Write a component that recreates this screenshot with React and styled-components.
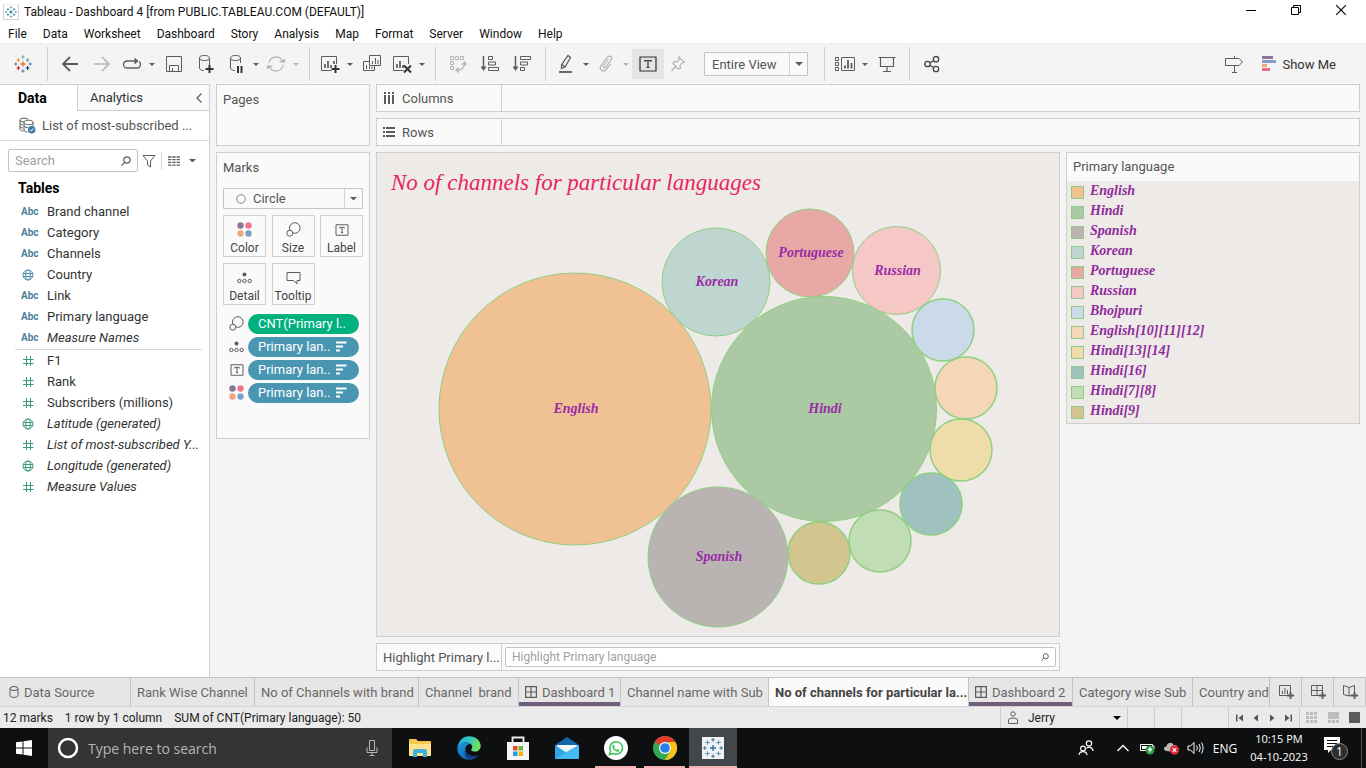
import React from "react";
import styled, { createGlobalStyle } from "styled-components";

const UI = `Roboto, "Liberation Sans", sans-serif`;
const SYS = `"Open Sans", "Noto Sans", sans-serif`;
const SCRIPT = `"Monotype Corsiva", "Lucida Calligraphy", "Liberation Serif", serif`;
const LINE = "#cfcfcf";

const Global = createGlobalStyle`
  *, *::before, *::after { box-sizing: border-box; }
  html, body { margin: 0; background: #f4f4f4; }
  body { font-family: ${UI}; font-size: 13px; color: #333; }
  button, input, select { font: inherit; color: inherit; margin: 0; }
  button { background: none; border: 0; padding: 0; cursor: pointer; }
  ul { list-style: none; margin: 0; padding: 0; }
  h1, h2, h3, p { margin: 0; font: inherit; }
  svg { display: block; flex: none; }
`;

const Page = styled.div`
  min-height: 100vh;
  display: flex;
  flex-direction: column;
`;

/* ---------- icons ---------- */

const Icon = ({ w = 20, h = w, box, children, color = "#5c5c5c", sw = 1, ...rest }) => (
  <svg width={w} height={h} viewBox={box || `0 0 ${w} ${h}`} fill="none" stroke={color} strokeWidth={sw} aria-hidden="true" {...rest}>
    {children}
  </svg>
);

const plus = (x, y, r) => `M${x - r} ${y}H${x + r}M${x} ${y - r}V${y + r}`;

const TableauMark = ({ size = 18, colors }) => {
  const c = colors || ["#e8762c", "#eb9a3c", "#c72035", "#7a9bb0", "#5b6b9a", "#1f457e"];
  return (
    <Icon w={size} box="0 0 18 18">
      <path d={plus(9, 9, 2.6)} stroke={c[0]} strokeWidth="1.5" />
      <path d={plus(4.4, 5, 1.9)} stroke={c[1]} strokeWidth="1.2" />
      <path d={plus(4.4, 13, 1.9)} stroke={c[2]} strokeWidth="1.2" />
      <path d={plus(13.6, 5, 1.9)} stroke={c[3]} strokeWidth="1.2" />
      <path d={plus(13.6, 13, 1.9)} stroke={c[5]} strokeWidth="1.2" />
      <path d={plus(9, 2, 1.7)} stroke={c[3]} />
      <path d={plus(9, 16, 1.7)} stroke={c[4]} />
      <path d={plus(1.8, 9, 1.5)} stroke={c[4]} />
      <path d={plus(16.2, 9, 1.5)} stroke={c[4]} />
    </Icon>
  );
};

const Caret = ({ w = 8, color = "#5c5c5c" }) => (
  <svg width={w} height={w / 2} viewBox="0 0 8 4" aria-hidden="true">
    <path d="M0 0H8L4 4Z" fill={color} />
  </svg>
);

const LIGHT = "#b4b4b4";
const DARK = "#333";

const BackIcon = () => <Icon sw="1.8"><path d="M18 10H3M10 3L3 10L10 17" /></Icon>;
const ForwardIcon = () => <Icon sw="1.6" color={LIGHT}><path d="M2 10H17M10 3L17 10L10 17" /></Icon>;
const RedoIcon = () => (
  <Icon sw="1.3"><path d="M15 7H5A3.500 3.500 0 0 0 5 14H15A3.500 3.500 0 0 0 18.500 10.500C18.500 9 18 8 17 7.500" /><path d="M12.500 3.500V10.500L16.500 7Z" fill="#5c5c5c" stroke="none" /></Icon>
);
const SaveIcon = () => <Icon><path d="M2.500 2.500H17.500V17.500H2.500ZM5.500 17V11.500H14.500V17M8.500 17V14" /></Icon>;
const DbAddIcon = () => (
  <Icon><ellipse cx="8.500" cy="4" rx="5" ry="2.500" /><path d="M3.500 4V14C3.500 15.500 5.500 16.500 8 16.500M13.500 4V11" /><path d="M13.500 11V19M9.500 15H17.500" stroke={DARK} strokeWidth="2" /></Icon>
);
const DbPauseIcon = () => (
  <Icon><ellipse cx="9.500" cy="4" rx="5" ry="2.500" /><path d="M4.500 4V14C4.500 15.500 6.500 16.500 9 16.500M14.500 4V9" /><path d="M12 12V19M15.500 12V19" stroke={DARK} strokeWidth="2" /></Icon>
);
const RefreshIcon = () => (
  <Icon color={LIGHT} sw="1.200"><path d="M3 9A7 7 0 0 1 16 6.500M17 11A7 7 0 0 1 4 13.500" /><path d="M13.500 8H18.500V5M6.500 12H1.500V15" fill={LIGHT} /></Icon>
);
const ChartAddIcon = () => (
  <Icon><path d="M11.500 16.500H1.500V2.500H16.500V10" /><path d="M5 14V10M8 14V7M11 14V11M14 10V7" strokeWidth="1.700" /><path d="M15.500 11V19M11.500 15H19.500" stroke={DARK} strokeWidth="2" /></Icon>
);
const DuplicateIcon = () => (
  <Icon><path d="M7.500 1.500H18.500V11.500H7.500ZM7 7.500H1.500V16.500H12.500V12" /><path d="M10.500 10V7M13.500 10V4M16 10V6M4.500 15V11M7.500 15V12.500M10 15V12.500" /></Icon>
);
const ClearIcon = () => (
  <Icon><path d="M11.500 16.500H1.500V2.500H16.500V10" /><path d="M5 14V10M8 14V7M11 14V11" strokeWidth="1.700" /><path d="M12 11.500L19 18.500M19 11.500L12 18.500" stroke={DARK} strokeWidth="2" /></Icon>
);
const SwapIcon = () => (
  <Icon color={LIGHT}><path d="M2.500 2.500H5.500V5.500H2.500ZM7.500 2.500H10.500V5.500H7.500ZM12.500 2.500H15.500V5.500H12.500ZM2.500 7.500H5.500V10.500H2.500ZM2.500 12.500H5.500V15.500H2.500Z" /><path d="M16.500 9C17 13 13.500 16.500 9 16M14 11L16.500 8L18.500 11M11 13.500L8 16L11 18.500" strokeWidth="1.300" /></Icon>
);
const SortAscIcon = () => (
  <Icon><path d="M3.500 2V15" strokeWidth="1.500" /><path d="M0.500 12.500H6.500L3.500 17Z" fill="#5c5c5c" stroke="none" /><path d="M8.500 2.500H12.500V5.500H8.500ZM8.500 8H15.500V11H8.500ZM8.500 13.500H18.500V16.500H8.500Z" /></Icon>
);
const SortDescIcon = () => (
  <Icon><path d="M3.500 2V15" strokeWidth="1.500" /><path d="M0.500 12.500H6.500L3.500 17Z" fill="#5c5c5c" stroke="none" /><path d="M8.500 2.500H18.500V5.500H8.500ZM8.500 8H15.500V11H8.500ZM8.500 13.500H12.500V16.500H8.500Z" /></Icon>
);
const PenIcon = () => (
  <Icon><path d="M12 1.500L14.500 3.500L9 13L5.500 14.500L5.500 11ZM6 10.500L9 13" strokeWidth="1.300" /><path d="M3 18H16" strokeWidth="1.800" /></Icon>
);
const ClipIcon = () => (
  <Icon color={LIGHT} sw="1.200"><path d="M12.500 5L7.500 11.500C6.500 13.500 8.500 14.500 9.500 13L15 6C17 3 13.500 0.800 11.500 3.200L5 11.500C2.500 15.500 7 19 10 15.500L14.500 10" /></Icon>
);
const TextBoxIcon = ({ w = 18, color = DARK }) => (
  <Icon w={w} h={Math.round(w * 0.89)} box="0 0 18 16" color={color} sw={w > 15 ? 1.2 : 1.3}>
    <path d="M1 1H17V15H1Z" /><path d="M6 6V4.500H12V6M9 4.500V11.500M7.500 11.500H10.500" />
  </Icon>
);
const PinIcon = () => (
  <Icon color={LIGHT} sw="1.200"><path d="M11 3L16.500 8.500L14 9L12 11.500L12.500 14.500L10 15L5 9.500L6 7.500L8.500 8L11 6ZM7.500 12.500L3.500 17" /></Icon>
);
const CardsIcon = () => (
  <Icon><path d="M0.500 3.500H3.500V6.500H0.500ZM0.500 8.500H3.500V11.500H0.500ZM0.500 13.500H3.500V16.500H0.500ZM6.500 3.500H19.500V16.500H6.500Z" /><path d="M10 14.500V11.500M13 14.500V6M16.500 14.500V9" strokeWidth="1.800" /></Icon>
);
const PresentIcon = () => <Icon sw="1.200"><path d="M1.500 3.500H18.500M3.500 3.500V12.500H16.500V3.500M10 12.500V17M6 17.500H14" /></Icon>;
const ShareIcon = () => (
  <Icon color="#444" sw="1.300"><circle cx="5.500" cy="10" r="2.700" /><circle cx="14" cy="5.200" r="2.700" /><circle cx="14" cy="15" r="2.700" /><path d="M8 9L11.500 6.800M8 11.200L11.500 13.500" /></Icon>
);
const SignIcon = () => <Icon><path d="M1.500 4.500H15L18.500 8L15 11.500H1.500ZM10.500 2V4M10.500 12V18M8 18.500H13" /></Icon>;
const ShowMeIcon = () => (
  <Icon w={14} h={16} stroke="none"><path d="M0 0H11V3H0Z" fill="#8a7798" /><path d="M0 4H14V7H0Z" fill="#7fa0c4" /><path d="M0 8H5V11H0Z" fill="#eda57c" /><path d="M0 12H8V15H0Z" fill="#e06d7f" /></Icon>
);
const SearchIcon = ({ color = "#5c5c5c", w = 10 }) => <Icon w={w} box="0 0 10 10" color={color} sw="1.200"><circle cx="6" cy="4" r="3.200" /><path d="M3.700 6.300L0.500 9.500" /></Icon>;
const DashIcon = () => <Icon w={12} sw="1.200"><path d="M0.600 0.600H11.400V11.400H0.600ZM6 0.600V11.400M0.600 6H11.400" /></Icon>;
const ColorDots = () => (
  <Icon w={15} stroke="none"><circle cx="3.500" cy="3.500" r="3.200" fill="#8a7798" /><circle cx="11.500" cy="3.500" r="3.200" fill="#f0758a" /><circle cx="3.500" cy="11.500" r="3.200" fill="#eda57c" /><circle cx="11.500" cy="11.500" r="3.200" fill="#7fa0c4" /></Icon>
);
const SizeIcon = () => <Icon w={15}><circle cx="8.800" cy="6" r="5.300" fill="#fafafa" /><circle cx="3.800" cy="11.200" r="3" fill="#fafafa" /></Icon>;
const DetailIcon = () => <Icon w={15} h={12}><circle cx="7.500" cy="2.500" r="2" fill="#5c5c5c" stroke="none" /><circle cx="2.300" cy="9" r="1.700" /><circle cx="7.500" cy="9" r="1.700" /><circle cx="12.700" cy="9" r="1.700" /></Icon>;
const TooltipIcon = () => <Icon w={15} h={14}><path d="M1 1.500H14V9.500H11V13L7.500 9.500H1Z" /></Icon>;
const SortPillIcon = () => <Icon w={11} h={11} color="#fff" sw="1.800"><path d="M0 1.500H10.500M0 5.500H7M0 9.500H4" /></Icon>;
const GlobeIcon = ({ color }) => <Icon w={12} color={color}><circle cx="6" cy="6" r="5" /><ellipse cx="6" cy="6" rx="2.300" ry="5" /><path d="M1 4.500H11M1 7.500H11" /></Icon>;
const HashIcon = ({ color }) => <Icon w={12} color={color}><path d="M4.500 1V11M8.500 1V11M1 4.500H11.500M1 8.500H11.500" /></Icon>;
const DatabaseIcon = () => (
  <Icon w={17}><ellipse cx="5" cy="3" rx="4" ry="2" /><path d="M1 3V12C1 13.500 3 14 4.500 14M1 6C1 7 2.500 8 4 8M1 9C1 10 2.500 11 4 11" /><ellipse cx="9.500" cy="5.500" rx="4.500" ry="2.200" fill="#fff" /><path d="M5 5.500V13C5 14.500 7 15 8.500 15M14 5.500V9M5 9C6 10.500 8 10.500 9 10.500" /><circle cx="12.700" cy="12.700" r="3.800" fill="#3f7ea3" stroke="none" /><path d="M11 12.700L12.300 14L14.500 11.500" stroke="#fff" /></Icon>
);
const FilterIcon = () => <Icon w={14}><path d="M1 1.500H13L8.500 7V13L5.500 11V7Z" /></Icon>;
const ListIcon = () => <Icon w={12} h={10} sw="1.300"><path d="M0 1H12M0 3.700H12M0 6.400H12M0 9.100H12" strokeDasharray="3.300 1" /></Icon>;
const ColumnsIcon = () => <Icon w={12} stroke="none"><path d="M1 0H3V2H1ZM5 0H7V2H5ZM9 0H11V2H9ZM1 3H3V12H1ZM5 3H7V12H5ZM9 3H11V12H9Z" fill="#5c5c5c" /></Icon>;
const RowsIcon = () => <Icon w={12} h={10} stroke="none"><path d="M0 0H2V2H0ZM0 4H2V6H0ZM0 8H2V10H0ZM3 0H12V2H3ZM3 4H12V6H3ZM3 8H12V10H3Z" fill="#5c5c5c" /></Icon>;

/* ---------- window header ---------- */

const TitleBar = styled.header`
  display: flex;
  align-items: center;
  height: 23px;
  padding: 0 3px;
  gap: 5px;
  background: #fff;
  color: #111;
  font: 12px/16px ${UI};
  h1 { flex: 1; }
`;
const AppBadge = styled.span`
  padding: 1px;
  border: 1px solid #cdd3d6;
  border-top-color: #eee;
`;
const WindowControls = styled.div`
  display: flex;
  align-self: flex-start;
`;
const WindowButton = styled.button`
  width: 45px;
  height: 20px;
  display: flex;
  align-items: center;
  justify-content: center;
`;
const MenuBar = styled.nav`
  background: #fff;
  height: 20px;
  padding-left: 8px;
  display: flex;
  gap: 16px;
  color: #111;
  font: 12px/22px ${UI};
`;

/* ---------- toolbar ---------- */

const Toolbar = styled.div`
  height: 41px;
  display: flex;
  background: #f4f4f4;
  border-top: 1px solid #ececec;
`;
const ToolGroup = styled.div`
  display: flex;
  align-items: center;
  padding: ${(p) => p.$pad || "0 7px 0 6px"};
  margin: 3px 0;
  border-right: 1px solid ${(p) => (p.$last ? "transparent" : LINE)};
  flex: ${(p) => (p.$last ? 1 : "none")};
`;
const ToolButton = styled.button`
  width: ${(p) => (p.$caret ? 12 : p.$split ? 28 : 32)}px;
  height: 30px;
  flex: none;
  display: flex;
  align-items: center;
  justify-content: center;
  background: ${(p) => (p.$on ? "#e4e4e4" : "none")};
`;
const Spacer = styled.span`flex: 1;`;
const ShowMe = styled.button`
  display: flex;
  align-items: center;
  gap: 6px;
  margin: 0 22px 0 12px;
  font-size: 13px;
`;
const SelectBox = styled.label`
  display: flex;
  align-items: center;
  height: ${(p) => p.$h || 22}px;
  width: ${(p) => p.$w || "auto"};
  margin: ${(p) => p.$m || 0};
  border: 1px solid #c4c4c4;
  border-radius: 1px;
  background: #fafafa;
  padding-left: ${(p) => p.$pl || 7}px;
  gap: 7px;
  color: #555;
  select {
    appearance: none;
    border: 0;
    background: none;
    flex: 1;
    min-width: 0;
    padding: 0;
    outline: 0;
  }
`;
const CaretCell = styled.span`
  width: 18px;
  flex: none;
  align-self: stretch;
  display: flex;
  align-items: center;
  justify-content: center;
  border-left: 1px solid #d4d4d4;
`;

const Tool = ({ label, icon, split, light, ...rest }) => (
  <>
    <ToolButton aria-label={label} $split={split} {...rest}>{icon}</ToolButton>
    {split && <ToolButton aria-label={`${label} options`} $caret><Caret w={6} color={light ? LIGHT : "#5c5c5c"} /></ToolButton>}
  </>
);

/* ---------- data pane ---------- */

const Workspace = styled.main`
  flex: 1;
  display: flex;
  background: #f4f4f4;
`;
const DataPane = styled.aside`
  width: 210px;
  flex: none;
  background: #fff;
  border: solid ${LINE};
  border-width: 1px 1px 0 0;
`;
const PaneTabs = styled.div`
  display: flex;
  height: 26px;
`;
const PaneTab = styled.button`
  width: ${(p) => (p.$active ? "77px" : "auto")};
  flex: ${(p) => (p.$active ? "none" : 1)};
  padding: 0 7px 0 ${(p) => (p.$active ? 18 : 12)}px;
  display: flex;
  align-items: center;
  justify-content: space-between;
  font-size: ${(p) => (p.$active ? 14 : 13)}px;
  font-weight: ${(p) => (p.$active ? 700 : 400)};
  color: ${(p) => (p.$active ? "#000" : "#333")};
  background: ${(p) => (p.$active ? "#fff" : "#fafafa")};
  border: solid ${LINE};
  border-width: ${(p) => (p.$active ? "0" : "0 0 1px 1px")};
`;
const SourceRow = styled.div`
  height: 30px;
  display: flex;
  align-items: center;
  gap: 6px;
  padding-left: 19px;
  color: #555;
  border-bottom: 1px solid #dcdcdc;
`;
const SearchRow = styled.div`
  display: flex;
  align-items: center;
  padding: 8px 8px 5px;
`;
const SearchBox = styled.label`
  width: 130px;
  height: 23px;
  display: flex;
  align-items: center;
  padding: 0 6px;
  border: 1px solid #c4c4c4;
  border-radius: 2px;
  background: #fff;
  margin-right: 4px;
  input {
    flex: 1;
    min-width: 0;
    border: 0;
    outline: 0;
    padding: 0;
    background: none;
    &::placeholder { color: #a0a0a0; opacity: 1; }
  }
`;
const ViewToggle = styled.button`
  display: flex;
  align-items: center;
  gap: 9px;
  height: 18px;
  margin-left: 5px;
  padding-left: 6px;
  border-left: 1px solid #d4d4d4;
`;
const TablesTitle = styled.h2`
  padding-left: 18px;
  font-size: 14px;
  line-height: 22px;
  font-weight: 700;
  color: #000;
`;
const FieldList = styled.ul`
  margin: 2px 7px 0 15px;
  & + & { border-top: 1px solid #d4d8d8; margin-top: 1px; }
`;
const Field = styled.li`
  height: 21px;
  display: flex;
  align-items: center;
  white-space: nowrap;
  font-style: ${(p) => (p.$italic ? "italic" : "normal")};
`;
const FieldType = styled.span`
  width: 32px;
  padding-left: ${(p) => (p.$text ? 6 : 7)}px;
  font: bold 10px/21px ${UI};
  color: #4a8099;
`;

/* ---------- cards ---------- */

const CardColumn = styled.div`
  width: 154px;
  flex: none;
  margin: 0 6px;
  display: flex;
  flex-direction: column;
  gap: 6px;
`;
const Card = styled.section`
  background: #fafafa;
  border: 1px solid ${LINE};
  padding: 0 6px;
  color: #555;
  min-height: ${(p) => p.$min || 0}px;
  h2 { line-height: 30px; }
`;
const MarkGrid = styled.div`
  display: grid;
  grid-template-columns: repeat(3, 43px);
  justify-content: space-between;
  gap: 6px 0;
  margin: 6px 0 7px;
`;
const MarkButton = styled.button`
  height: 42px;
  padding-top: 3px;
  border: 1px solid ${LINE};
  display: flex;
  flex-direction: column;
  align-items: center;
  justify-content: space-between;
  font-size: 12px;
  line-height: 16px;
  color: #444;
  svg { margin: auto; }
`;
const PillRow = styled.li`
  height: 23px;
  display: flex;
  align-items: center;
  gap: 4px;
  padding: 0 4px 0 6px;
`;
const PillIcon = styled.span`
  width: 15px;
  display: flex;
  justify-content: center;
`;
const Pill = styled.button`
  flex: 1;
  height: 20px;
  border-radius: 10px;
  padding: 0 12px 0 10px;
  display: flex;
  align-items: center;
  justify-content: space-between;
  color: #fff;
  background: ${(p) => (p.$measure ? "#00b180" : "#4996b2")};
`;

/* ---------- view ---------- */

const ViewColumn = styled.div`
  flex: 1;
  min-width: 0;
  display: flex;
  flex-direction: column;
  gap: 6px;
  padding: 0 6px 6px 0;
`;
const Shelf = styled.div`
  display: flex;
  height: 28px;
  border: 1px solid ${LINE};
  background: #fafafa;
  color: #555;
`;
const ShelfLabel = styled.div`
  width: 125px;
  flex: none;
  display: flex;
  align-items: center;
  gap: 7px;
  padding-left: 6px;
  border-right: 1px solid ${LINE};
`;
const SheetRow = styled.div`
  flex: 1;
  display: flex;
  align-items: stretch;
  gap: 6px;
`;
const SheetColumn = styled.div`
  flex: 1;
  min-width: 0;
  display: flex;
  flex-direction: column;
  gap: 6px;
`;
const Sheet = styled.section`
  flex: 1;
  display: flex;
  flex-direction: column;
  background: #eeeae7;
  border: 1px solid ${LINE};
`;
const SheetTitle = styled.h2`
  padding: 12px 0 0 14px;
  height: 50px;
  font: italic 23px/36px ${SCRIPT};
  color: #e6265f;
`;
const Bubbles = styled.svg`
  width: 100%;
  flex: 1;
  min-height: 0;
  circle { stroke: #8fcf82; }
  text {
    font: italic bold 14px ${SCRIPT};
    fill: #9a2ba6;
    text-anchor: middle;
  }
`;
const HighlightBox = styled(SearchBox)`
  flex: 1;
  width: auto;
  height: 20px;
  margin: 3px;
  font-size: 12px;
`;
const Legend = styled.section`
  width: 294px;
  flex: none;
  align-self: flex-start;
  border: 1px solid ${LINE};
  background: #eeeae7;
  h2 {
    background: #fafafa;
    line-height: 28px;
    padding-left: 6px;
    color: #555;
  }
  ul { padding-bottom: 2px; }
`;
const LegendItem = styled.li`
  height: 20px;
  display: flex;
  align-items: center;
  gap: 6px;
  padding-left: 4px;
  font: italic bold 14px/16px ${SCRIPT};
  color: #8f2b9c;
`;
const Swatch = styled.span`
  width: 13px;
  height: 13px;
  margin-top: 3px;
  border: 1px solid #90cc88;
  background: ${(p) => p.$color};
`;

/* ---------- sheet tabs and status ---------- */

const SheetTabs = styled.nav`
  height: 30px;
  display: flex;
  background: #e6e6e6;
  border-top: 1px solid #c4c4c4;
  border-bottom: 1px solid #d4d4d4;
`;
const SheetTab = styled.button`
  width: ${(p) => p.$w}px;
  padding-left: ${(p) => (p.$source ? 9 : 6)}px;
  display: flex;
  align-items: center;
  gap: 5px;
  overflow: hidden;
  white-space: pre;
  color: ${(p) => (p.$active ? "#444" : "#686868")};
  font-weight: ${(p) => (p.$active ? 700 : 400)};
  background: ${(p) => (p.$active ? "#fafafa" : "none")};
  border-right: 1px solid #c4c4c4;
  box-shadow: ${(p) => (p.$dash ? "inset 0 -4px #6f5f7d" : "none")};
`;
const NewTab = styled(SheetTab)`
  flex: 1;
  min-width: 32px;
  padding: 0;
  justify-content: center;
`;
const StatusBar = styled.footer`
  height: 21px;
  display: flex;
  padding-left: 3px;
  background: #eaeaea;
  font-size: 12px;
  line-height: 22px;
  color: #222;
  p { margin-right: 12px; }
`;
const StatusCell = styled.div`
  width: ${(p) => p.$w}px;
  border-left: 1px solid #cdcdcd;
  display: flex;
  align-items: center;
  justify-content: ${(p) => (p.$user ? "flex-start" : "space-between")};
  gap: ${(p) => (p.$user ? 9 : 0)}px;
  padding: 0 6px;
`;

/* ---------- task bar ---------- */

const TaskBar = styled.div`
  height: 40px;
  display: flex;
  background: #0d0f11;
  color: #fff;
  font-family: ${SYS};
`;
const StartButton = styled.button`
  width: 48px;
  display: flex;
  align-items: center;
  justify-content: center;
`;
const TaskSearch = styled.label`
  width: 344px;
  margin-right: 3px;
  display: flex;
  align-items: center;
  gap: 9px;
  padding: 0 14px 0 9px;
  background: #333436;
  input {
    flex: 1;
    min-width: 0;
    padding: 0;
    border: 0;
    outline: 0;
    background: none;
    font-size: 14px;
    &::placeholder { color: #b4b4b4; opacity: 1; }
  }
`;
const TaskButton = styled.button`
  width: ${(p) => (p.$on ? 48 : 49)}px;
  display: flex;
  align-items: center;
  justify-content: center;
  position: relative;
  background: ${(p) => (p.$on ? "#43474a" : "none")};
  &::after {
    content: "";
    position: absolute;
    left: ${(p) => (p.$on ? 0 : 4)}px;
    right: ${(p) => (p.$on ? 0 : 4)}px;
    bottom: 0;
    height: 2px;
    background: ${(p) => (p.$open ? "#f3b2b2" : "transparent")};
  }
`;
const TrayButton = styled.button`
  width: ${(p) => p.$w}px;
  display: flex;
  align-items: center;
  justify-content: center;
  color: #fff;
  font-size: 12px;
`;
const Clock = styled.div`
  width: 72px;
  text-align: center;
  font-size: 11px;
  line-height: 18px;
  padding-top: 2px;
`;
const ShowDesktop = styled.button`
  width: 5px;
  margin-left: 4px;
  border-left: 1px solid #555;
`;

/* ---------- data ---------- */

const MENUS = ["File", "Data", "Worksheet", "Dashboard", "Story", "Analysis", "Map", "Format", "Server", "Window", "Help"];

const DIMENSIONS = [
  ["text", "Brand channel"], ["text", "Category"], ["text", "Channels"], ["globe", "Country"],
  ["text", "Link"], ["text", "Primary language"], ["text", "Measure Names", true],
];
const MEASURES = [
  ["hash", "F1"], ["hash", "Rank"], ["hash", "Subscribers (millions)"], ["globe", "Latitude (generated)", true],
  ["hash", "List of most-subscribed Y...", true], ["globe", "Longitude (generated)", true], ["hash", "Measure Values", true],
];

const BUBBLES = [
  { name: "English", color: "#f0c193", x: 198, y: 206, r: 136, label: true },
  { name: "Hindi", color: "#abcaa3", x: 447, y: 206, r: 112.5, label: true },
  { name: "Spanish", color: "#b9b4b1", x: 341, y: 354, r: 70, label: true },
  { name: "Korean", color: "#bfd5d0", x: 339, y: 79, r: 54, label: true },
  { name: "Portuguese", color: "#e8a8a6", x: 433, y: 50, r: 44, label: true },
  { name: "Russian", color: "#f5c7c5", x: 519.5, y: 67.5, r: 44, label: true },
  { name: "Bhojpuri", color: "#cbdae8", x: 566, y: 127, r: 31 },
  { name: "English[10][11][12]", color: "#f5d7b8", x: 589, y: 185, r: 31 },
  { name: "Hindi[13][14]", color: "#efdda9", x: 584, y: 247, r: 31 },
  { name: "Hindi[16]", color: "#a0c2bf", x: 554, y: 301, r: 31 },
  { name: "Hindi[7][8]", color: "#c1ddb4", x: 503, y: 338, r: 31 },
  { name: "Hindi[9]", color: "#d3c58f", x: 442, y: 350, r: 31 },
];

const PILLS = [
  { icon: <SizeIcon />, text: "CNT(Primary l..", measure: true },
  { icon: <DetailIcon />, text: "Primary lan.." },
  { icon: <TextBoxIcon w={14} color="#5c5c5c" />, text: "Primary lan.." },
  { icon: <ColorDots />, text: "Primary lan.." },
];

const TABS = [
  { name: "Rank Wise Channel", w: 124 }, { name: "No of Channels with brand", w: 164 }, { name: "Channel  brand", w: 100 },
  { name: "Dashboard 1", w: 102, dash: true }, { name: "Channel name with Sub", w: 148 },
  { name: "No of channels for particular la...", w: 200, active: true }, { name: "Dashboard 2", w: 104, dash: true },
  { name: "Category wise Sub", w: 120 }, { name: "Country and", w: 77 },
];

const Fields = ({ items, color }) => (
  <FieldList>
    {items.map(([type, name, italic]) => (
      <Field key={name} $italic={italic}>
        <FieldType $text={type === "text"}>
          {type === "text" ? "Abc" : type === "globe" ? <GlobeIcon color={color} /> : <HashIcon color={color} />}
        </FieldType>
        {name}
      </Field>
    ))}
  </FieldList>
);

const NavArrow = ({ d, label }) => (
  <button aria-label={label}><Icon w={9} h={8}><path d={d} fill="#555" strokeWidth="0" /></Icon></button>
);

export default function App() {
  return (
    <Page>
      <Global />
      <TitleBar>
        <AppBadge><TableauMark size={12} colors={["#1f6a93", "#3c86a8", "#3c86a8", "#3c86a8", "#3c86a8", "#3c86a8"]} /></AppBadge>
        <h1>Tableau - Dashboard 4 [from PUBLIC.TABLEAU.COM (DEFAULT)]</h1>
        <WindowControls>
          <WindowButton aria-label="Minimize"><Icon w={10} color="#000"><path d="M0 5.500H10" /></Icon></WindowButton>
          <WindowButton aria-label="Restore"><Icon w={10} color="#000"><path d="M0.500 2.500H7.500V9.500H0.500ZM2.500 2.500V0.500H9.500V7.500H7.500" /></Icon></WindowButton>
          <WindowButton aria-label="Close"><Icon w={10} color="#000" sw="1.100"><path d="M0 0L10 10M10 0L0 10" /></Icon></WindowButton>
        </WindowControls>
      </TitleBar>
      <MenuBar>{MENUS.map((m) => <button key={m}>{m}</button>)}</MenuBar>

      <Toolbar>
        <ToolGroup $pad="0 8px 0 7px"><Tool label="Start page" icon={<TableauMark />} /></ToolGroup>
        <ToolGroup>
          <Tool label="Undo" icon={<BackIcon />} />
          <Tool label="Redo" icon={<ForwardIcon />} />
          <Tool label="Replay" icon={<RedoIcon />} split />
          <Tool label="Save" icon={<SaveIcon />} />
          <Tool label="New data source" icon={<DbAddIcon />} />
          <Tool label="Pause updates" icon={<DbPauseIcon />} split />
          <Tool label="Refresh" icon={<RefreshIcon />} split light />
        </ToolGroup>
        <ToolGroup>
          <Tool label="New worksheet" icon={<ChartAddIcon />} split />
          <Tool label="Duplicate" icon={<DuplicateIcon />} />
          <Tool label="Clear sheet" icon={<ClearIcon />} split />
        </ToolGroup>
        <ToolGroup>
          <Tool label="Swap rows and columns" icon={<SwapIcon />} />
          <Tool label="Sort ascending" icon={<SortAscIcon />} />
          <Tool label="Sort descending" icon={<SortDescIcon />} />
        </ToolGroup>
        <ToolGroup $pad="0 16px 0 6px">
          <Tool label="Highlight" icon={<PenIcon />} split />
          <Tool label="Group members" icon={<ClipIcon />} split light />
          <Tool label="Show mark labels" icon={<TextBoxIcon />} $on />
          <ToolButton aria-label="Fix axes" $split><PinIcon /></ToolButton>
          <SelectBox $h={24} $w="104px" $m="0 0 0 12px">
            <select aria-label="Fit"><option>Entire View</option></select>
            <CaretCell><Caret /></CaretCell>
          </SelectBox>
        </ToolGroup>
        <ToolGroup $pad="0 6px">
          <Tool label="Cards" icon={<CardsIcon />} split />
          <Tool label="Presentation mode" icon={<PresentIcon />} />
        </ToolGroup>
        <ToolGroup $last>
          <Tool label="Share" icon={<ShareIcon />} />
          <Spacer />
          <Tool label="Guide" icon={<SignIcon />} />
          <ShowMe><ShowMeIcon />Show Me</ShowMe>
        </ToolGroup>
      </Toolbar>

      <Workspace>
        <DataPane>
          <PaneTabs>
            <PaneTab $active>Data</PaneTab>
            <PaneTab>Analytics<Icon w={6} h={10}><path d="M5.500 0.500L1 5L5.500 9.500" strokeWidth="1.200" /></Icon></PaneTab>
          </PaneTabs>
          <SourceRow><DatabaseIcon />List of most-subscribed ...</SourceRow>
          <SearchRow>
            <SearchBox><input aria-label="Search fields" placeholder="Search" /><SearchIcon /></SearchBox>
            <button aria-label="Filter fields"><FilterIcon /></button>
            <ViewToggle aria-label="View options"><ListIcon /><Caret w={7} /></ViewToggle>
          </SearchRow>
          <TablesTitle>Tables</TablesTitle>
          <Fields items={DIMENSIONS} color="#4a8fb0" />
          <Fields items={MEASURES} color="#3d9b7d" />
        </DataPane>

        <CardColumn>
          <Card $min={62}><h2>Pages</h2></Card>
          <Card $min={287}>
            <h2>Marks</h2>
            <SelectBox $m="5px 0 0" $h={21} $pl={12}>
              <Icon w={10} color="#888"><circle cx="5" cy="5" r="4.300" /></Icon>
              <select aria-label="Mark type"><option>Circle</option></select>
              <CaretCell><Caret w={7} /></CaretCell>
            </SelectBox>
            <MarkGrid>
              <MarkButton><ColorDots />Color</MarkButton>
              <MarkButton><SizeIcon />Size</MarkButton>
              <MarkButton><TextBoxIcon w={14} color="#5c5c5c" />Label</MarkButton>
              <MarkButton><DetailIcon />Detail</MarkButton>
              <MarkButton><TooltipIcon />Tooltip</MarkButton>
            </MarkGrid>
            <ul>
              {PILLS.map((p, i) => (
                <PillRow key={i}>
                  <PillIcon>{p.icon}</PillIcon>
                  <Pill $measure={p.measure}>{p.text}{!p.measure && <SortPillIcon />}</Pill>
                </PillRow>
              ))}
            </ul>
          </Card>
        </CardColumn>

        <ViewColumn>
          <Shelf><ShelfLabel><ColumnsIcon />Columns</ShelfLabel></Shelf>
          <Shelf><ShelfLabel><RowsIcon />Rows</ShelfLabel></Shelf>
          <SheetRow>
            <SheetColumn>
              <Sheet>
                <SheetTitle>No of channels for particular languages</SheetTitle>
                <Bubbles viewBox="0 0 682 433" role="img" aria-label="Channels by primary language">
                  {BUBBLES.map((b) => <circle key={b.name} cx={b.x} cy={b.y} r={b.r} fill={b.color} strokeWidth={b.label ? 1 : 1.5} />)}
                  {BUBBLES.filter((b) => b.label).map((b) => <text key={b.name} x={b.x + 1} y={b.y + 4}>{b.name}</text>)}
                </Bubbles>
              </Sheet>
              <Shelf>
                <ShelfLabel>Highlight Primary l...</ShelfLabel>
                <HighlightBox><input aria-label="Highlight Primary language" placeholder="Highlight Primary language" /><SearchIcon w={8} /></HighlightBox>
              </Shelf>
            </SheetColumn>
            <Legend>
              <h2>Primary language</h2>
              <ul>{BUBBLES.map((b) => <LegendItem key={b.name}><Swatch $color={b.color} />{b.name}</LegendItem>)}</ul>
            </Legend>
          </SheetRow>
        </ViewColumn>
      </Workspace>

      <SheetTabs>
        <SheetTab $w={131} $source>
          <Icon w={10} h={12}><ellipse cx="5" cy="2.500" rx="4" ry="2" /><path d="M1 2.500V9.500C1 12 9 12 9 9.500V2.500" /></Icon>Data Source
        </SheetTab>
        {TABS.map((t) => <SheetTab key={t.name} $w={t.w} $active={t.active} $dash={t.dash}>{t.dash && <DashIcon />}{t.name}</SheetTab>)}
        <NewTab aria-label="New worksheet"><Icon w={16}><path d="M9.500 11.500H1.500V1.500H12.500V8M4.500 10V7M7 10V4M9.500 10V6" /><path d="M12.500 8V15M9 11.500H16" strokeWidth="1.800" /></Icon></NewTab>
        <NewTab aria-label="New dashboard"><Icon w={16}><path d="M9 11.500H1.500V1.500H12.500V8M7 1.500V11.500M1.500 6.500H12.500" /><path d="M12.500 8V15M9 11.500H16" strokeWidth="1.800" /></Icon></NewTab>
        <NewTab aria-label="New story"><Icon w={16}><path d="M7 3.500V12L1.500 10.500V1.500L7 3.500L12.500 1.500V8M7 12L9 11.500" /><path d="M12.500 8V15M9 11.500H16" strokeWidth="1.800" /></Icon></NewTab>
      </SheetTabs>

      <StatusBar>
        <p>12 marks</p><p>1 row by 1 column</p><p>SUM of CNT(Primary language): 50</p>
        <Spacer />
        <StatusCell $w={127} $user>
          <Icon w={12} h={13}><circle cx="6" cy="3" r="2.200" /><path d="M1.500 12.500V9C1.500 6.500 10.500 6.500 10.500 9V12.500Z" /></Icon>Jerry<Spacer /><Caret color="#000" />
        </StatusCell>
        <StatusCell $w={27} /><StatusCell $w={27} /><StatusCell $w={47} />
        <StatusCell $w={71}>
          <NavArrow label="First sheet" d="M1 0.500H2.500V7.500H1ZM8 0.500V7.500L3.500 4Z" />
          <NavArrow label="Previous sheet" d="M7 0.500V7.500L2.500 4Z" />
          <NavArrow label="Next sheet" d="M2 0.500V7.500L6.500 4Z" />
          <NavArrow label="Last sheet" d="M6.500 0.500H8V7.500H6.500ZM1 0.500V7.500L5.500 4Z" />
        </StatusCell>
        <StatusCell $w={67}>
          <Icon w={11} stroke="none"><path d="M0 0H3V3H0ZM4 0H7V3H4ZM8 0H11V3H8ZM0 4H3V7H0ZM4 4H7V7H4ZM8 4H11V7H8ZM0 8H3V11H0ZM4 8H7V11H4ZM8 8H11V11H8Z" fill="#bdbdbd" /></Icon>
          <Icon w={11} stroke="none"><path d="M0 0H11V7H0ZM0 8H3V11H0ZM4 8H7V11H4ZM8 8H11V11H8Z" fill="#bdbdbd" /></Icon>
          <Icon w={11} stroke="none"><path d="M0 0H11V11H0Z" fill="#5c5c5c" /></Icon>
        </StatusCell>
      </StatusBar>

      <TaskBar>
        <StartButton aria-label="Start"><Icon w={16} stroke="none"><path d="M0 2.300L6.500 1.400V7.500H0ZM7.500 1.200L16 0V7.500H7.500ZM0 8.500H6.500V14.600L0 13.700ZM7.500 8.500H16V16L7.500 14.800Z" fill="#fff" /></Icon></StartButton>
        <TaskSearch>
          <Icon w={22} color="#fff" sw="2.500"><circle cx="11" cy="11" r="9" /></Icon>
          <input aria-label="Type here to search" placeholder="Type here to search" />
          <Icon w={12} h={18} color="#b4b4b4"><path d="M3.500 1.500H8.500V11.500H3.500ZM1 8.500V13.500H11V8.500M6 13.500V17M3.500 16.500H8.500" /></Icon>
        </TaskSearch>
        <TaskButton aria-label="File Explorer">
          <Icon w={22} h={18} stroke="none"><path d="M0 1C0 0.500 0.500 0 1 0H7L9 2H21C21.500 2 22 2.500 22 3V17H0Z" fill="#f7c64f" /><path d="M0 5H22V17H0Z" fill="#fde28d" /><path d="M4 18V12C4 11 5 10 6 10H16C17 10 18 11 18 12V18H14V14H8V18Z" fill="#3fb0e0" /></Icon>
        </TaskButton>
        <TaskButton aria-label="Edge">
          <svg width="24" height="24" viewBox="0 0 24 24" aria-hidden="true">
            <defs>
              <linearGradient id="edgeTop" x1="0" y1="0" x2="1" y2="0.300"><stop offset="0" stopColor="#2aa5e8" /><stop offset="0.500" stopColor="#2fc6c8" /><stop offset="1" stopColor="#6fe05a" /></linearGradient>
              <linearGradient id="edgeLow" x1="0" y1="0" x2="1" y2="1"><stop offset="0" stopColor="#1b9de2" /><stop offset="1" stopColor="#0c4fa3" /></linearGradient>
            </defs>
            <path d="M0.500 12C1 5 6 0.300 12 0.300C19 0.300 23.700 5 23.700 10C23.700 13.500 21 15.500 18 15.500C15.500 15.500 14.200 14.600 14.200 13.700C14.200 13 15.200 12.500 15.200 11C15.200 8 12 6.500 8.500 6.500C4.500 6.500 1.500 9 0.500 12Z" fill="url(#edgeTop)" />
            <path d="M0.300 12C1.500 8.500 5 6.500 8.500 6.500C10.500 6.500 12 7 13 7.700C9.500 8.500 8 11.500 8.500 14.500C9.200 18.500 13 20.500 16.500 20.500C18.500 20.500 20.500 19.700 21.700 18.700C19.500 22 16 23.700 12 23.700C5.500 23.700 0 18.500 0.300 12Z" fill="url(#edgeLow)" />
            <path d="M8.400 13.500C9 17.500 12.500 19.700 16 20C18.500 20.200 20.500 19.300 21.700 18.700C19.500 22 16 23.700 12 23.700C8 22 7 17 8.400 13.500Z" fill="#123f7e" />
          </svg>
        </TaskButton>
        <TaskButton aria-label="Microsoft Store">
          <Icon w={24} h={24} stroke="none"><path d="M6.500 7V1.500H17.500V7" stroke="#eee" strokeWidth="1.800" /><path d="M1 6H23V24H1Z" fill="#f4f4f4" /><path d="M7 10H11.500V14.500H7Z" fill="#e8502c" /><path d="M12.500 10H17V14.500H12.500Z" fill="#78b52c" /><path d="M7 15.500H11.500V20H7Z" fill="#1e9fe0" /><path d="M12.500 15.500H17V20H12.500Z" fill="#f7b51c" /></Icon>
        </TaskButton>
        <TaskButton aria-label="Mail">
          <Icon w={24} h={24} stroke="none"><path d="M0 9L12 1L24 9V12H0Z" fill="#1565ae" /><path d="M2 9H22V16H2Z" fill="#f2f6fa" /><path d="M0 9L12 17L24 9V23H0Z" fill="#2fa4e7" /><path d="M0 23L12 15.500L24 9V23Z" fill="#45b9f2" /></Icon>
        </TaskButton>
        <TaskButton aria-label="WhatsApp" $open>
          <Icon w={24} h={24} stroke="none"><circle cx="12" cy="12" r="12" fill="#fff" /><path d="M5.500 18.500L6.500 15C4.500 11 7 5.700 12 5.700C16 5.700 18.500 8.500 18.500 12C18.500 16.500 13.500 19.500 9 17.500Z" stroke="#3cc65a" strokeWidth="1.600" /><path d="M9.500 8.500L10.800 10.700L10.200 11.700C10.700 12.800 11.500 13.500 12.500 13.900L13.500 13L15.500 14.200C15 16 13.500 16 12.500 15.600C10.500 14.800 9 13.200 8.500 11.500C8.200 10 8.500 9 9.500 8.500Z" fill="#3cc65a" /></Icon>
        </TaskButton>
        <TaskButton aria-label="Chrome" $open>
          <Icon w={24} h={24} stroke="none"><circle cx="12" cy="12" r="12" fill="#34a853" /><path d="M12 0A12 12 0 0 1 22.400 6H12A6 6 0 0 0 6.800 9L1.600 6A12 12 0 0 1 12 0Z" fill="#e33b2e" /><path d="M22.400 6A12 12 0 0 1 12 24L17.200 15A6 6 0 0 0 17.200 9L15 6Z" fill="#fbc116" /><circle cx="12" cy="12" r="6" fill="#fff" /><circle cx="12" cy="12" r="4.800" fill="#2a7de8" /></Icon>
        </TaskButton>
        <TaskButton aria-label="Tableau" $open $on>
          <svg width="22" height="22" viewBox="0 0 22 22" aria-hidden="true"><path d="M0 0H22V22H0Z" fill="#eef2f4" /><path d={plus(11, 11, 3)} stroke="#2a6c96" strokeWidth="1.300" /><path d={[[5.5, 5.5], [16.5, 5.5], [5.5, 16.5], [16.5, 16.5]].map(([x, y]) => plus(x, y, 2.2)).join("")} stroke="#5b92b0" /><path d={[[11, 2.8], [11, 19.2], [2.8, 11], [19.2, 11]].map(([x, y]) => plus(x, y, 1.7)).join("")} stroke="#2a6c96" /></svg>
        </TaskButton>
        <Spacer />
        <TrayButton aria-label="People" $w={50}><Icon w={16} color="#fff" sw="1.200"><circle cx="11" cy="3.500" r="2.700" /><circle cx="5" cy="8.500" r="2.400" /><path d="M8.500 8.500C10 6.500 14.500 6.500 15 11M1 15C1.500 10.500 8.500 10.500 9 15" /></Icon></TrayButton>
        <TrayButton aria-label="Show hidden icons" $w={24}><Icon w={12} h={8} color="#fff" sw="1.300"><path d="M0.500 7L6 1.500L11.500 7" /></Icon></TrayButton>
        <TrayButton aria-label="Battery" $w={24}><Icon w={16} h={14} color="#fff"><path d="M1.500 3.500H13.500V9.500H1.500ZM14 5H15V8H14" /><path d="M3 5H8V8H3Z" fill="#fff" stroke="none" /><circle cx="11" cy="9" r="4.500" fill="#2e9b45" stroke="none" /><path d="M11 6.500L12.800 9H9.200ZM11 8V11.500" fill="#fff" /></Icon></TrayButton>
        <TrayButton aria-label="OneDrive" $w={24}><Icon w={17} h={14} stroke="none"><path d="M4 10C0 10 0 5.500 3.500 5.500C4 1.500 9 0.500 10.500 4C14 3.500 15 6 14.500 8L10 11Z" fill="#b9b9b9" /><circle cx="11.500" cy="9" r="4.700" fill="#d92b3a" /><path d="M9.700 7.200L13.300 10.800M13.300 7.200L9.700 10.800" stroke="#fff" strokeWidth="1.200" /></Icon></TrayButton>
        <TrayButton aria-label="Volume" $w={24}><Icon w={17} h={14} color="#fff"><path d="M1 5H3.500L7 1.500V12.500L3.500 9H1ZM9.500 4.500C10.500 6 10.500 8 9.500 9.500M12 3C13.500 5.500 13.500 8.500 12 11M14.500 1.500C16.500 5 16.500 9 14.500 12.500" /></Icon></TrayButton>
        <TrayButton $w={36}>ENG</TrayButton>
        <Clock>10:15 PM<br />04-10-2023</Clock>
        <TrayButton aria-label="1 notification" $w={42}>
          <svg width="26" height="24" viewBox="0 0 26 24" aria-hidden="true"><path d="M1 1H17V14H8L5 17V14H1Z" fill="#fff" /><path d="M4 4.500H14M4 7.500H14M4 10.500H10" stroke="#0d0f11" /><circle cx="16.500" cy="15.500" r="8" fill="#2c2e30" stroke="#8a8a8a" /><text x="16.500" y="20" textAnchor="middle" fill="#fff" fontSize="12" fontFamily="Open Sans">1</text></svg>
        </TrayButton>
        <ShowDesktop aria-label="Show desktop" />
      </TaskBar>
    </Page>
  );
}
